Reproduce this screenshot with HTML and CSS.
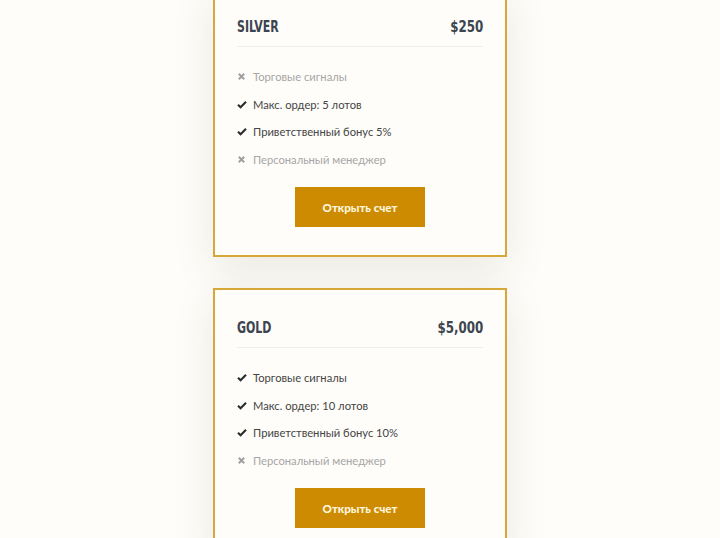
FILE: index.html
```html
<!DOCTYPE html>
<html lang="ru">
<head>
    <meta charset="UTF-8">
    <meta name="viewport" content="width=device-width, initial-scale=1.0">
    <title>Тарифы</title>
    <link rel="stylesheet" href="styles.css">
</head>
<body>

<div class="plans">

    <div class="plan">
        <div class="plan-head">
            <h3 class="plan-name">SILVER</h3>
            <span class="plan-price">$250</span>
        </div>
        <ul class="features">
            <li class="off">
                <svg class="icon" viewBox="0 0 10 10"><path d="M2 2 L8 8 M8 2 L2 8"/></svg>
                Торговые сигналы
            </li>
            <li>
                <svg class="icon" viewBox="0 0 12 10"><path d="M1.2 5.2 L4.3 8.2 L10.8 1.6"/></svg>
                Макс. ордер: 5 лотов
            </li>
            <li>
                <svg class="icon" viewBox="0 0 12 10"><path d="M1.2 5.2 L4.3 8.2 L10.8 1.6"/></svg>
                Приветственный бонус 5%
            </li>
            <li class="off">
                <svg class="icon" viewBox="0 0 10 10"><path d="M2 2 L8 8 M8 2 L2 8"/></svg>
                Персональный менеджер
            </li>
        </ul>
        <a href="#" class="btn">Открыть счет</a>
    </div>

    <div class="plan">
        <div class="plan-head">
            <h3 class="plan-name">GOLD</h3>
            <span class="plan-price">$5,000</span>
        </div>
        <ul class="features">
            <li>
                <svg class="icon" viewBox="0 0 12 10"><path d="M1.2 5.2 L4.3 8.2 L10.8 1.6"/></svg>
                Торговые сигналы
            </li>
            <li>
                <svg class="icon" viewBox="0 0 12 10"><path d="M1.2 5.2 L4.3 8.2 L10.8 1.6"/></svg>
                Макс. ордер: 10 лотов
            </li>
            <li>
                <svg class="icon" viewBox="0 0 12 10"><path d="M1.2 5.2 L4.3 8.2 L10.8 1.6"/></svg>
                Приветственный бонус 10%
            </li>
            <li class="off">
                <svg class="icon" viewBox="0 0 10 10"><path d="M2 2 L8 8 M8 2 L2 8"/></svg>
                Персональный менеджер
            </li>
        </ul>
        <a href="#" class="btn">Открыть счет</a>
    </div>

</div>

</body>
</html>
```

FILE: styles.css
```css
body {
    margin: 0;
    background-color: #fefdf9;
    font-family: Lato, "Open Sans", sans-serif;
    overflow: hidden;
}
.plans {
    display: flex;
    flex-direction: column;
    align-items: center;
    gap: 31px;
    margin-top: -13px;
}
.plan {
    width: 246px;
    padding: 28px 22px 28px 22px;
    border: 2px solid #d7a73a;
    background: #fefdf9;
    box-shadow: 0 12px 40px rgba(60, 50, 30, 0.1);
    display: flex;
    flex-direction: column;
}
.plan-head {
    display: flex;
    justify-content: space-between;
    align-items: center;
    padding-bottom: 9px;
    border-bottom: 1px solid #f0eeea;
}
/* narrow heading face: squeeze the condensed bold horizontally */
.plan-name, .plan-price {
    margin: 0;
    font-family: "DejaVu Sans Condensed", sans-serif;
    font-stretch: condensed;
    font-weight: bold;
    font-size: 16.5px;
    line-height: 20px;
    color: #3c4450;
}
.plan-name {
    transform: scaleX(0.74);
    transform-origin: left center;
}
.plan-price {
    transform: scaleX(0.8);
    transform-origin: right center;
}
.features {
    list-style: none;
    margin: 16px 0 14px;
    padding: 0;
}
.features li {
    display: flex;
    align-items: center;
    height: 27.5px;
    font-size: 11.2px;
    color: #454545;
}
.features li.off {
    color: #a6a6a6;
}
.icon {
    width: 10px;
    height: 9px;
    margin-right: 6px;
    fill: none;
    stroke: #2b2b2b;
    stroke-width: 2.5;
    stroke-linecap: butt;
    stroke-linejoin: miter;
}
.off .icon {
    width: 9px;
    height: 9px;
    margin-right: 7px;
    stroke: #a0a0a0;
    stroke-width: 2.2;
}
.btn {
    align-self: center;
    width: 130px;
    height: 40px;
    display: flex;
    align-items: center;
    justify-content: center;
    background-color: #cc8b00;
    color: #fff6de;
    font-size: 11.5px;
    font-weight: 900;
    text-decoration: none;
}
```
